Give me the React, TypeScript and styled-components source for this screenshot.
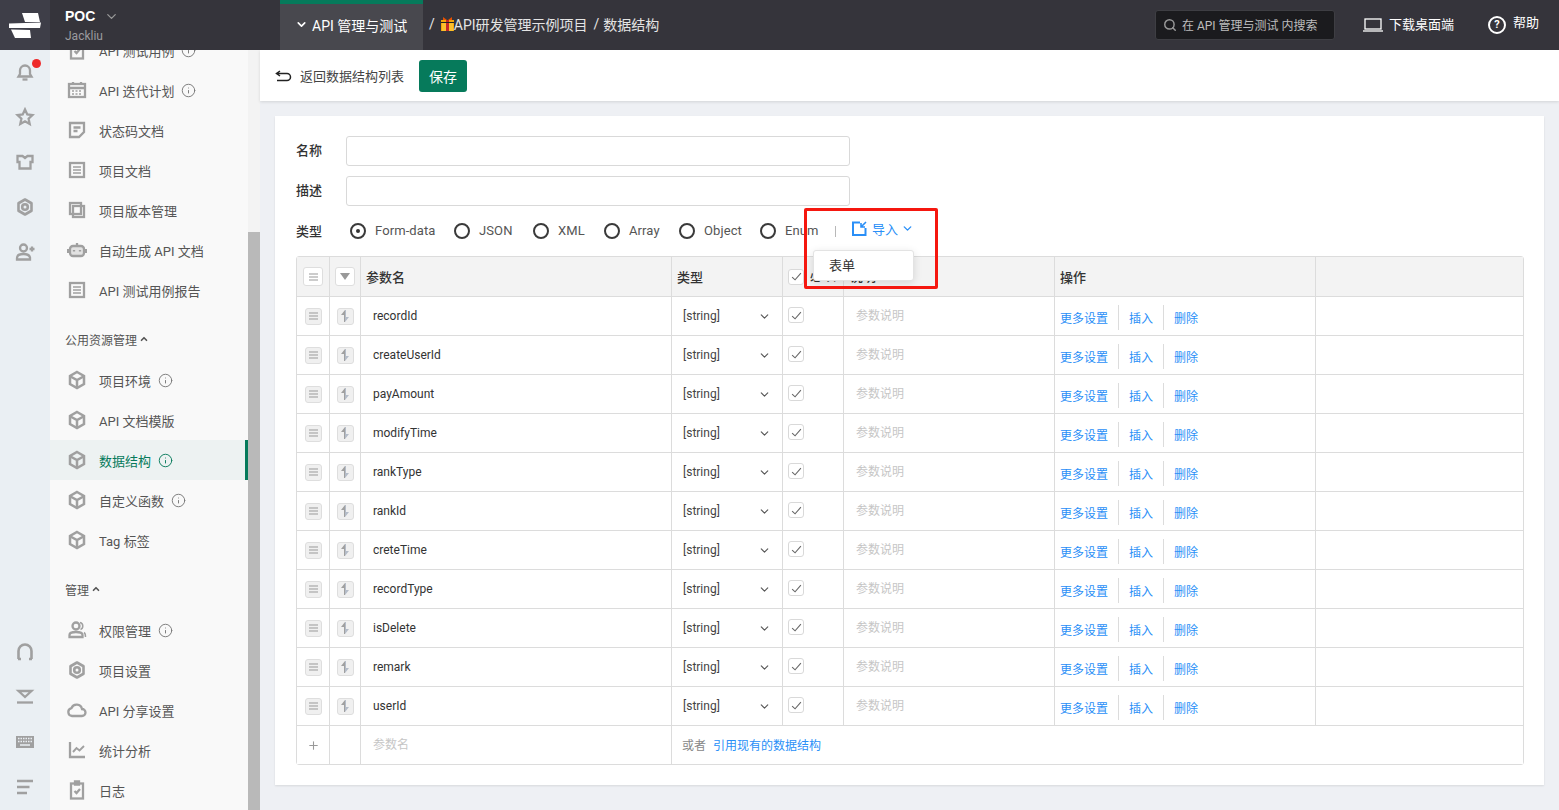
import React from 'react';
import styled, { createGlobalStyle } from 'styled-components';
import { ChevronDown, ChevronUp, Search, Info, Plus } from 'lucide-react';

const GlobalStyle = createGlobalStyle`
  html, body { margin: 0; padding: 0; height: 810px; overflow: hidden; }
  body {
    font-family: Roboto, "Noto Sans CJK SC", "Liberation Sans", sans-serif;
    font-size: 13px;
    color: #333;
    background: #eef0f4;
  }
  * { box-sizing: border-box; }
`;

const GRAY = '#a0a0a0';
const GREEN = '#067a5b';
const BLUE = '#2a8ff7';

/* icons */
type IconProps = { size?: number; color?: string; sw?: number };
const Ico = ({ size = 20, color = GRAY, sw = 2.3, children }: IconProps & { children: React.ReactNode }) => (
  <svg width={size} height={size} viewBox="0 0 20 20" fill="none" stroke={color} strokeWidth={sw} style={{ flex: 'none', display: 'block' }}>
    {children}
  </svg>
);

const BellIcon = () => <Ico><path d="M3.500 14.500h13l-1.500-2.500V8.500a5 5 0 0 0-10 0V12z" /><path d="M7.500 17.500h5" /></Ico>;
const StarIcon = () => <Ico><path d="M10 2.500l2.300 5 5.200.6-3.900 3.600 1.100 5.300-4.700-2.700-4.700 2.700 1.100-5.300-3.900-3.600 5.200-.6z" /></Ico>;
const ShirtIcon = () => <Ico><path d="M2.500 4h5l2.500 2 2.500-2h5v6h-2v6.500h-11V10h-2z" /></Ico>;
const GearIcon = () => (
  <Ico sw={2.600}>
    <path d="M10 2.500l6.500 3.750v7.500L10 17.500l-6.500-3.750v-7.500z" strokeLinejoin="round" />
    <circle cx="10" cy="10" r="2.800" />
  </Ico>
);
const UserPlusIcon = () => <Ico><circle cx="8.500" cy="6" r="3.500" /><path d="M2 17.500v-1.500c0-2.500 2.500-4 6.500-4s6 1.200 6.500 3.500v2z" /><path d="M14.500 7h5M17 4.500v5" /></Ico>;
const HeadIcon = () => <Ico sw={2.600}><path d="M3.500 17V9a6.500 6.500 0 0 1 13 0v8" /><path d="M3 17h3M14 17h3" /></Ico>;
const DownIcon = () => <Ico><path d="M3.500 4h13L10 10z" /><path d="M2 15.500h16" /></Ico>;
const KeyboardIcon = () => (
  <Ico sw={0}>
    <rect x="1" y="4" width="18" height="12" fill={GRAY} />
    <path d="M3 6.500h14M3 9.500h14" stroke="#eaeff3" strokeWidth="1.300" strokeDasharray="1.500 1" />
    <path d="M5 13h10" stroke="#eaeff3" strokeWidth="1.500" />
  </Ico>
);
const LinesIcon = () => <Ico><path d="M2 4h16M2 10h12.500M2 16h10" /></Ico>;

const CalendarIcon = () => <Ico><rect x="2" y="4" width="16" height="13" /><path d="M6 2v3M14 2v3M2 8h16" /><path d="M5 11h10M5 14h10" strokeWidth="1.500" strokeDasharray="2 1.500" /></Ico>;
const NoteIcon = () => <Ico><path d="M3 3h14v9l-5 5H3z" /><path d="M6.500 7.500h7M6.500 11h4" /></Ico>;
const DocIcon = () => <Ico><rect x="3" y="3" width="14" height="14" /><path d="M6 7h8M6 10h8M6 13h8" strokeWidth="1.500" /></Ico>;
const CopyIcon = () => <Ico><rect x="3" y="3" width="11" height="11" /><rect x="6" y="6" width="11" height="11" /></Ico>;
const RobotIcon = () => (
  <Ico>
    <rect x="3" y="6" width="14" height="10" rx="3" fill={GRAY} fillOpacity="0.25" />
    <path d="M10 3v3M1 9v4M19 9v4" />
    <path d="M7 10v1.500M13 10v1.500" />
  </Ico>
);
const CubeIcon = () => <Ico sw={2.500}><path d="M10 2l7 4v8l-7 4-7-4V6z" /><path d="M3.500 6.500L10 10l6.500-3.500M10 10v7.500" /></Ico>;
const PeopleIcon = () => <Ico><circle cx="9" cy="6" r="3.500" /><path d="M2.500 17v-2c0-2 3-3 6.500-3s6.500 1 6.500 3v2z" /><path d="M13 2.500c2 .5 2.800 2 2.800 3.500s-.8 3-2.300 3.500M17 12.500c1 .5 1.500 1.500 1.500 4.500" strokeWidth="1.500" /></Ico>;
const CloudIcon = () => <Ico><path d="M5 16a4 4 0 0 1-.5-7.900 5.500 5.500 0 0 1 10.500.9A3.500 3.500 0 0 1 15 16z" /></Ico>;
const ChartIcon = () => <Ico><path d="M3 2v15h15" /><path d="M6 12l3.500-4 3 2.500L17 6" strokeWidth="1.900" /></Ico>;
const ClipIcon = () => <Ico><rect x="4" y="3.500" width="12" height="15" /><path d="M8 1.500h4v3H8z" fill={GRAY} /><path d="M7.500 11l2 2 3.500-4" /></Ico>;

const Logo = () => (
  <svg width="32" height="25" viewBox="0 0 32 25" fill="#fff" style={{ display: 'block' }}>
    <polygon points="13,0 29,0 31,9 16,9" />
    <polygon points="0,10.500 32,9.500 31,15 0,15" />
    <polygon points="2,16.500 21,17 22,25 6,25" />
  </svg>
);

const Gift = () => (
  <svg width="13" height="14" viewBox="0 0 13 14" style={{ flex: 'none' }}>
    <rect x="0" y="3" width="13" height="11" fill="#f5a60a" />
    <rect x="1" y="6" width="11" height="8" fill="#fbc02d" />
    <rect x="5" y="3" width="3" height="11" fill="#c62828" />
    <path d="M2 0l4 3H2zM11 0L7 3h4z" fill="#e65100" />
    <rect x="0" y="5" width="13" height="1" fill="#222" />
  </svg>
);

const Tick = ({ size = 11 }: { size?: number }) => (
  <svg width={size} height={size} viewBox="0 0 10 10" fill="none" stroke="#666" strokeWidth="1"><path d="M1 5.500l2.700 2.500L9 2" /></svg>
);

/* top bar */
const TopBar = styled.header`
  display: flex;
  align-items: stretch;
  height: 50px;
  background: #35343b;
  color: #fff;
`;
const LogoCell = styled.div`
  width: 50px;
  display: flex;
  align-items: center;
  justify-content: center;
  background: #3e3e48;
`;
const Project = styled.div`
  width: 230px;
  padding: 8px 0 0 15px;
`;
const ProjectName = styled.div`
  display: flex;
  align-items: center;
  gap: 9px;
  font-family: "Liberation Sans", sans-serif;
  font-size: 14px;
  font-weight: 700;
  line-height: 16px;
`;
const ProjectUser = styled.div`
  margin-top: 4px;
  font-size: 12px;
  line-height: 16px;
  color: #9b9b9f;
`;
const ModuleTab = styled.div`
  width: 143px;
  display: flex;
  align-items: center;
  gap: 4px;
  padding: 0 0 5px 15px;
  background: #48484e;
  border-top: 4px solid ${GREEN};
  font-size: 14px;
`;
const Crumbs = styled.div`
  flex: 1;
  display: flex;
  align-items: center;
  padding: 0 0 2px 6px;
  font-size: 14px;
  color: #e4e4e4;
  white-space: nowrap;
`;
const Slash = styled.span<{ $left?: number; $right: number }>`
  margin-left: ${(p) => p.$left ?? 0}px;
  margin-right: ${(p) => p.$right}px;
`;
const SearchBox = styled.div`
  width: 180px;
  height: 30px;
  margin-top: 10px;
  display: flex;
  align-items: center;
  gap: 5px;
  padding: 0 0 1px 7px;
  background: #1b1b1e;
  border: 1px solid #3e3e43;
  border-radius: 3px;
  font-size: 12px;
  color: #bdbdbd;
  white-space: nowrap;
`;
const TopLink = styled.div<{ $left: number; $right?: number }>`
  display: flex;
  align-items: center;
  gap: 6px;
  margin-left: ${(p) => p.$left}px;
  margin-right: ${(p) => p.$right ?? 0}px;
  font-size: 13px;
  line-height: 16px;
`;
const LiftedText = styled.span<{ $up: number }>`
  margin-bottom: ${(p) => p.$up}px;
`;

/* body */
const Shell = styled.div`
  display: flex;
  height: 760px;
  overflow: hidden;
`;
const Rail = styled.nav`
  width: 50px;
  flex: none;
  display: flex;
  flex-direction: column;
  align-items: center;
  justify-content: space-between;
  padding: 12px 0 13px;
  background: #eaeff3;
`;
const RailGroup = styled.div`
  display: flex;
  flex-direction: column;
  gap: 25px;
`;
const RailItem = styled.div`
  position: relative;
  width: 20px;
  height: 20px;
`;
const RedDot = styled.span`
  position: absolute;
  top: -3px;
  right: -6px;
  width: 9px;
  height: 9px;
  border-radius: 50%;
  background: #ee2a2a;
`;
const Side = styled.aside`
  width: 198px;
  flex: none;
  overflow: hidden;
  background: #f9f9f9;
`;
const SideList = styled.div`
  margin-top: -20px;
`;
const SideItem = styled.div<{ $active?: boolean }>`
  height: 40px;
  display: flex;
  align-items: center;
  gap: 12px;
  padding-left: 17px;
  color: ${(p) => (p.$active ? GREEN : '#555')};
  background: ${(p) => (p.$active ? '#edf2f2' : 'transparent')};
  border-right: 3px solid ${(p) => (p.$active ? GREEN : 'transparent')};
  white-space: nowrap;
`;
const ItemLabel = styled.span`
  display: flex;
  align-items: center;
  gap: 7px;
`;
const SideHead = styled.div`
  height: 50px;
  display: flex;
  align-items: center;
  gap: 2px;
  padding: 8px 0 0 15px;
  font-size: 12px;
  color: #555;
`;
const ScrollTrack = styled.div`
  width: 12px;
  flex: none;
  display: flex;
  flex-direction: column;
  padding-top: 182px;
  background: #f3f3f3;
`;
const ScrollThumb = styled.div`
  flex: 1;
  background: #b9b9b9;
`;
const Main = styled.main`
  flex: 1;
  min-width: 0;
  background: #eef0f4;
`;
const SubBar = styled.div`
  height: 51px;
  display: flex;
  align-items: center;
  padding-left: 15px;
  background: #fff;
  box-shadow: 0 1px 3px rgba(0, 0, 0, 0.12);
`;
const BackLink = styled.div`
  display: flex;
  align-items: center;
  gap: 8px;
  color: #444;
`;
const SaveButton = styled.button`
  width: 48px;
  height: 32px;
  margin-left: 15px;
  border: 0;
  border-radius: 3px;
  background: ${GREEN};
  color: #fff;
  font: inherit;
  font-size: 14px;
`;
const Card = styled.section`
  margin: 15px 15px 0;
  padding: 20px 20px 20px 21px;
  background: #fff;
  box-shadow: 0 1px 2px rgba(0, 0, 0, 0.1);
`;
const FieldRow = styled.div`
  display: flex;
  align-items: center;
  height: 30px;
  margin-bottom: 10px;
`;
const FieldLabel = styled.label`
  width: 50px;
  flex: none;
  padding-bottom: 3px;
  font-weight: 500;
  color: #333;
`;
const TextInput = styled.div`
  width: 504px;
  height: 30px;
  border: 1px solid #d9d9d9;
  border-radius: 3px;
`;
const TypeRow = styled(FieldRow)`
  position: relative;
`;
const TypeLabel = styled(FieldLabel)`
  width: 54px;
  padding: 0 0 2px;
`;
const RadioItem = styled.div<{ $w: number }>`
  width: ${(p) => p.$w}px;
  display: flex;
  align-items: center;
  gap: 9px;
  padding-bottom: 1px;
  color: #555;
  letter-spacing: 0.1px;
`;
const RadioMark = styled.span<{ $on?: boolean }>`
  position: relative;
  width: 16px;
  height: 16px;
  flex: none;
  border: 2px solid #3a3a3a;
  border-radius: 50%;
  &::after {
    content: '';
    display: ${(p) => (p.$on ? 'block' : 'none')};
    position: absolute;
    top: 4px;
    left: 4px;
    width: 4px;
    height: 4px;
    border-radius: 50%;
    background: #333;
  }
`;
const Divider = styled.span`
  width: 1px;
  height: 11px;
  background: #b8b8b8;
`;
const ImportMenu = styled.div`
  display: flex;
  align-items: center;
  gap: 5px;
  margin: 0 0 6px 16px;
  color: ${BLUE};
`;
const ImportCaret = styled(ChevronDown)`
  margin-left: -2px;
`;
const Popup = styled.div`
  position: absolute;
  top: 34px;
  left: 517px;
  z-index: 3;
  width: 101px;
  height: 31px;
  padding: 0 0 2px 15px;
  display: flex;
  align-items: center;
  background: #fff;
  border: 1px solid #e3e3e3;
  border-radius: 3px;
  box-shadow: 0 2px 8px rgba(0, 0, 0, 0.12);
  color: #333;
`;
const RedBox = styled.div`
  position: absolute;
  top: -8px;
  left: 508px;
  z-index: 4;
  width: 134px;
  height: 81px;
  border: 3px solid #f5170f;
  border-radius: 2px;
  pointer-events: none;
`;

/* table */
const ParamTable = styled.div`
  border: 1px solid #dcdcdc;
  border-radius: 3px;
  font-size: 12px;
`;
const Row = styled.div<{ $head?: boolean; $last?: boolean }>`
  display: grid;
  grid-template-columns: 32px 31px 311px 111px 61px 211px 261px 1fr;
  height: ${(p) => (p.$head ? 40 : p.$last ? 38 : 39)}px;
  background: ${(p) => (p.$head ? '#f3f3f3' : '#fff')};
  border-bottom: ${(p) => (p.$last ? 0 : '1px solid #dcdcdc')};
`;
const Cell = styled.div<{ $pad?: number; $center?: boolean }>`
  display: flex;
  align-items: center;
  justify-content: ${(p) => (p.$center ? 'center' : 'flex-start')};
  padding-left: ${(p) => p.$pad ?? 0}px;
  border-left: 1px solid #dcdcdc;
  white-space: nowrap;
  min-width: 0;
  &:first-child { border-left: 0; }
`;
const HeadText = styled.span<{ $up?: number }>`
  margin-bottom: ${(p) => p.$up ?? 0}px;
  font-size: 13px;
  font-weight: 500;
  color: #333;
`;
const Handle = styled.span<{ $head?: boolean }>`
  width: ${(p) => (p.$head ? 20 : 17)}px;
  height: ${(p) => (p.$head ? 19 : 17)}px;
  display: flex;
  align-items: center;
  justify-content: center;
  background: ${(p) => (p.$head ? '#fff' : '#f0f0f0')};
  border: 1px solid #dedede;
  border-radius: 3px;
`;
const Check = styled.span`
  width: 16px;
  height: 16px;
  margin: -2px 0 0 5px;
  display: flex;
  align-items: center;
  justify-content: center;
  background: #fff;
  border: 1px solid #d9d9d9;
  border-radius: 3px;
`;
const HeadCheck = styled(Check)`
  margin: 0 6px 0 5px;
`;
const TypeSelect = styled.div`
  width: 100%;
  display: flex;
  align-items: center;
  justify-content: space-between;
  padding-right: 11px;
  color: #444;
`;
const Hint = styled.span`
  margin-bottom: 3px;
  color: #c6c6c6;
`;
const Ops = styled.div`
  display: flex;
  align-items: center;
  margin-top: 2px;
  color: ${BLUE};
`;
const OpSep = styled.span`
  width: 1px;
  height: 25px;
  margin: 0 10px;
  background: #dcdcdc;
`;
const OrText = styled.span`
  margin-bottom: 1px;
  color: #888;
`;
const RefLink = styled.span`
  margin: 0 0 1px 7px;
  color: ${BLUE};
`;

const Bars = ({ color = '#999' }: { color?: string }) => (
  <svg width="9" height="8" viewBox="0 0 9 8" stroke={color} strokeWidth="1"><path d="M0 1h9M0 4h9M0 7h9" /></svg>
);
const Swap = () => (
  <svg width="10" height="12" viewBox="0 0 10 12">
    <path d="M5 0L1 5h3v7h1z" fill="#a0a0a0" />
    <path d="M5 12l4-5H6V0H5z" fill="#b4bcc8" />
  </svg>
);
const TriDown = () => (
  <svg width="10" height="7" viewBox="0 0 10 7" fill="#999"><path d="M0 0h10L5 7z" /></svg>
);
const ImportIcon = () => (
  <svg width="15" height="15" viewBox="0 0 15 15" fill="none">
    <path d="M8 1.500H1v12.500h12.500V7" stroke={BLUE} strokeWidth="2" />
    <path d="M14 1L9.500 5.500M9 2v4h4" stroke={BLUE} strokeWidth="1.600" />
  </svg>
);
const Laptop = () => (
  <svg width="20" height="14" viewBox="0 0 20 14" fill="none" stroke="#fff" strokeWidth="1.300">
    <rect x="2" y="1" width="16" height="10" />
    <path d="M0 13h20" />
  </svg>
);
const HelpMark = styled.span`
  width: 18px;
  height: 18px;
  margin-right: 1px;
  display: flex;
  align-items: center;
  justify-content: center;
  border: 2px solid #fff;
  border-radius: 50%;
  font-size: 11px;
  font-weight: 700;
`;

const InfoBadge = ({ color = '#777' }: { color?: string }) => <Info size={15} color={color} strokeWidth={1.500} />;

const firstGroup = [
  { icon: <ClipIcon />, label: 'API 测试用例', info: true },
  { icon: <CalendarIcon />, label: 'API 迭代计划', info: true },
  { icon: <NoteIcon />, label: '状态码文档' },
  { icon: <DocIcon />, label: '项目文档' },
  { icon: <CopyIcon />, label: '项目版本管理' },
  { icon: <RobotIcon />, label: '自动生成 API 文档' },
  { icon: <DocIcon />, label: 'API 测试用例报告' },
];
const resourceGroup = [
  { icon: <CubeIcon />, label: '项目环境', info: true },
  { icon: <CubeIcon />, label: 'API 文档模版' },
  { icon: <CubeIcon />, label: '数据结构', info: true, active: true },
  { icon: <CubeIcon />, label: '自定义函数', info: true },
  { icon: <CubeIcon />, label: 'Tag 标签' },
];
const manageGroup = [
  { icon: <PeopleIcon />, label: '权限管理', info: true },
  { icon: <GearIcon />, label: '项目设置' },
  { icon: <CloudIcon />, label: 'API 分享设置' },
  { icon: <ChartIcon />, label: '统计分析' },
  { icon: <ClipIcon />, label: '日志' },
];
const params = ['recordId', 'createUserId', 'payAmount', 'modifyTime', 'rankType', 'rankId', 'creteTime', 'recordType', 'isDelete', 'remark', 'userId'];
const types = [
  { name: 'Form-data', w: 104 },
  { name: 'JSON', w: 79 },
  { name: 'XML', w: 71 },
  { name: 'Array', w: 75 },
  { name: 'Object', w: 81 },
  { name: 'Enum', w: 75 },
];

type Item = { icon: React.ReactNode; label: string; info?: boolean; active?: boolean };
const SideGroup = ({ items }: { items: Item[] }) => (
  <>
    {items.map((it) => (
      <SideItem key={it.label} $active={it.active}>
        {it.icon}
        <ItemLabel>
          {it.label}
          {it.info && <InfoBadge color={it.active ? GREEN : '#777'} />}
        </ItemLabel>
      </SideItem>
    ))}
  </>
);

const App = () => (
  <>
    <GlobalStyle />
    <TopBar>
      <LogoCell><Logo /></LogoCell>
      <Project>
        <ProjectName>POC <ChevronDown size={15} color="#999" /></ProjectName>
        <ProjectUser>Jackliu</ProjectUser>
      </Project>
      <ModuleTab><ChevronDown size={13} strokeWidth={3} />API 管理与测试</ModuleTab>
      <Crumbs>
        <Slash $right={6}>/</Slash>
        <Gift />
        API研发管理示例项目
        <Slash $left={6} $right={4}>/</Slash>
        数据结构
      </Crumbs>
      <SearchBox><Search size={14} color="#999" strokeWidth={2.500} />在 API 管理与测试 内搜索</SearchBox>
      <TopLink $left={28}><Laptop /><LiftedText $up={1}>下载桌面端</LiftedText></TopLink>
      <TopLink $left={34} $right={20}><HelpMark>?</HelpMark><LiftedText $up={4}>帮助</LiftedText></TopLink>
    </TopBar>
    <Shell>
      <Rail>
        <RailGroup>
          <RailItem><BellIcon /><RedDot /></RailItem>
          <RailItem><StarIcon /></RailItem>
          <RailItem><ShirtIcon /></RailItem>
          <RailItem><GearIcon /></RailItem>
          <RailItem><UserPlusIcon /></RailItem>
        </RailGroup>
        <RailGroup>
          <RailItem><HeadIcon /></RailItem>
          <RailItem><DownIcon /></RailItem>
          <RailItem><KeyboardIcon /></RailItem>
          <RailItem><LinesIcon /></RailItem>
        </RailGroup>
      </Rail>
      <Side>
        <SideList>
          <SideGroup items={firstGroup} />
          <SideHead>公用资源管理<ChevronUp size={10} strokeWidth={4} /></SideHead>
          <SideGroup items={resourceGroup} />
          <SideHead>管理<ChevronUp size={10} strokeWidth={4} /></SideHead>
          <SideGroup items={manageGroup} />
        </SideList>
      </Side>
      <ScrollTrack><ScrollThumb /></ScrollTrack>
      <Main>
        <SubBar>
          <BackLink>
            <svg width="17" height="12" viewBox="0 0 17 12" fill="none" stroke="#222" strokeWidth="1.500"><path d="M5 1L1.500 3.500 5 6M2 3.500h10a3.500 3.500 0 0 1 0 7H2" /></svg>
            返回数据结构列表
          </BackLink>
          <SaveButton>保存</SaveButton>
        </SubBar>
        <Card>
          <FieldRow><FieldLabel>名称</FieldLabel><TextInput /></FieldRow>
          <FieldRow><FieldLabel>描述</FieldLabel><TextInput /></FieldRow>
          <TypeRow>
            <TypeLabel>类型</TypeLabel>
            {types.map((t, i) => (
              <RadioItem key={t.name} $w={t.w}><RadioMark $on={i === 0} />{t.name}</RadioItem>
            ))}
            <Divider />
            <ImportMenu><ImportIcon />导入<ImportCaret size={13} strokeWidth={2.500} /></ImportMenu>
            <Popup>表单</Popup>
            <RedBox />
          </TypeRow>
          <ParamTable>
            <Row $head>
              <Cell $center><Handle $head><Bars /></Handle></Cell>
              <Cell $center><Handle $head><TriDown /></Handle></Cell>
              <Cell $pad={5}><HeadText>参数名</HeadText></Cell>
              <Cell $pad={5}><HeadText>类型</HeadText></Cell>
              <Cell><HeadCheck><Tick /></HeadCheck><HeadText $up={5}>必填</HeadText></Cell>
              <Cell $pad={6}><HeadText $up={2}>说明</HeadText></Cell>
              <Cell $pad={5}><HeadText>操作</HeadText></Cell>
              <Cell />
            </Row>
            {params.map((name) => (
              <Row key={name}>
                <Cell $center><Handle><Bars /></Handle></Cell>
                <Cell $center><Handle><Swap /></Handle></Cell>
                <Cell $pad={12}>{name}</Cell>
                <Cell $pad={11}>
                  <TypeSelect>[string]<ChevronDown size={13} color="#555" /></TypeSelect>
                </Cell>
                <Cell><Check><Tick /></Check></Cell>
                <Cell $pad={12}><Hint>参数说明</Hint></Cell>
                <Cell $pad={5}>
                  <Ops>更多设置<OpSep />插入<OpSep />删除</Ops>
                </Cell>
                <Cell />
              </Row>
            ))}
            <Row $last>
              <Cell $center><Plus size={13} color="#999" /></Cell>
              <Cell />
              <Cell $pad={12}><Hint>参数名</Hint></Cell>
              <Cell $pad={10}><OrText>或者</OrText><RefLink>引用现有的数据结构</RefLink></Cell>
            </Row>
          </ParamTable>
        </Card>
      </Main>
    </Shell>
  </>
);

export default App;
